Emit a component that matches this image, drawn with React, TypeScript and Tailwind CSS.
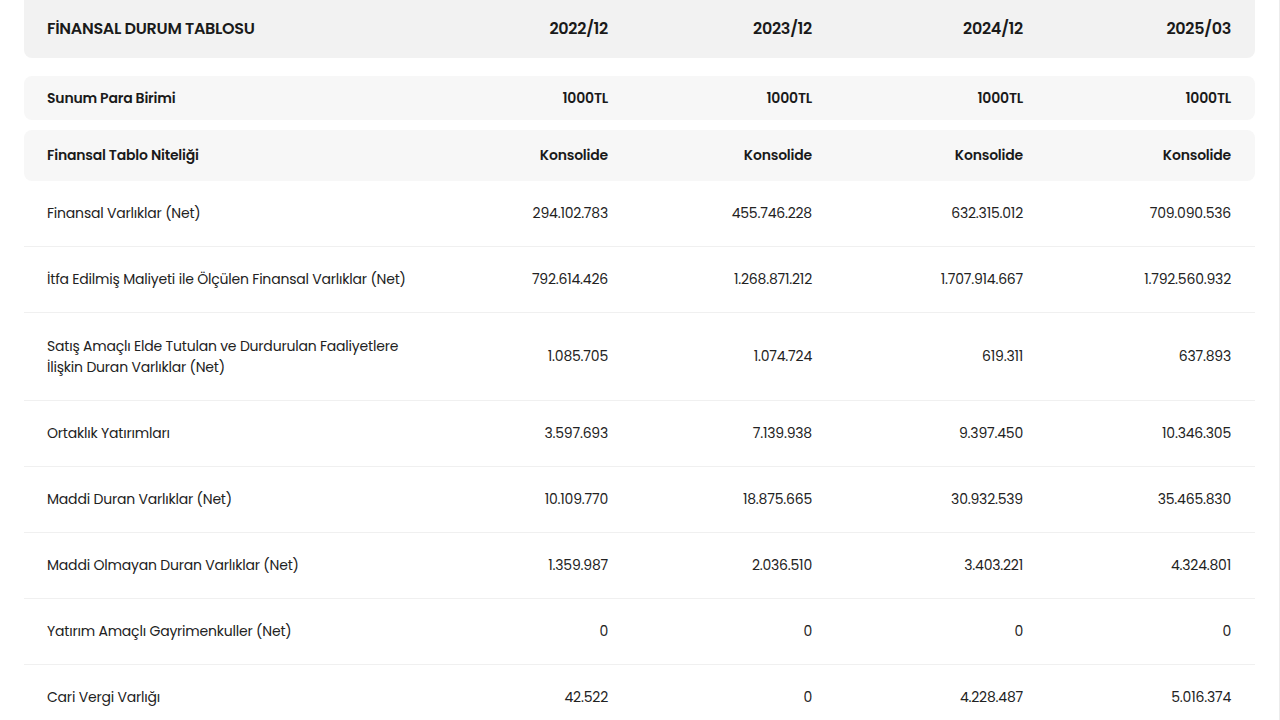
import React from "react";

const W = ["w-[380px]", "w-[181px]", "w-[204px]", "w-[211px]", "w-[208px]"];

const rows: [string, string[]][] = [
  ["Finansal Varlıklar (Net)", ["294.102.783", "455.746.228", "632.315.012", "709.090.536"]],
  ["İtfa Edilmiş Maliyeti ile Ölçülen Finansal Varlıklar (Net)", ["792.614.426", "1.268.871.212", "1.707.914.667", "1.792.560.932"]],
  ["Satış Amaçlı Elde Tutulan ve Durdurulan Faaliyetlere İlişkin Duran Varlıklar (Net)", ["1.085.705", "1.074.724", "619.311", "637.893"]],
  ["Ortaklık Yatırımları", ["3.597.693", "7.139.938", "9.397.450", "10.346.305"]],
  ["Maddi Duran Varlıklar (Net)", ["10.109.770", "18.875.665", "30.932.539", "35.465.830"]],
  ["Maddi Olmayan Duran Varlıklar (Net)", ["1.359.987", "2.036.510", "3.403.221", "4.324.801"]],
  ["Yatırım Amaçlı Gayrimenkuller (Net)", ["0", "0", "0", "0"]],
  ["Cari Vergi Varlığı", ["42.522", "0", "4.228.487", "5.016.374"]],
];

function Cells({ label, vals, cls }: { label: React.ReactNode; vals: string[]; cls: string }) {
  return (
    <>
      <div className={`${W[0]} shrink-0 ${cls}`}>{label}</div>
      {vals.map((v, i) => (
        <div key={i} className={`${W[i + 1]} shrink-0 text-right ${cls}`}>{v}</div>
      ))}
    </>
  );
}

export default function App() {
  return (
    <div className="w-[1280px] h-[720px] overflow-hidden bg-white border-r border-[#ececec]" style={{ fontFamily: "Poppins, Inter, 'Noto Sans', sans-serif" }}>
      <div className="ml-[24px] w-[1231px] text-[#1a1a1a]">
        <div className="h-[58px] bg-[#f2f2f2] rounded-b-lg flex items-center px-[23px]">
          <Cells label="FİNANSAL DURUM TABLOSU" vals={["2022/12", "2023/12", "2024/12", "2025/03"]} cls="text-[16px] font-semibold tracking-[-0.3px]" />
        </div>
        <div className="mt-[18px] h-[44px] bg-[#f7f7f7] rounded-lg flex items-center px-[23px]">
          <Cells label="Sunum Para Birimi" vals={["1000TL", "1000TL", "1000TL", "1000TL"]} cls="text-[14px] font-semibold tracking-[-0.2px]" />
        </div>
        <div className="mt-[10px] h-[51px] bg-[#f7f7f7] rounded-lg flex items-center px-[23px]">
          <Cells label="Finansal Tablo Niteliği" vals={["Konsolide", "Konsolide", "Konsolide", "Konsolide"]} cls="text-[14px] font-semibold tracking-[-0.2px]" />
        </div>
        {rows.map(([l, v], i) => (
          <div key={i} className={`flex items-center px-[23px] border-b border-[#f0f0f0] ${l.length > 60 ? "h-[88px]" : "h-[66px]"}`}>
            <Cells label={<span className="block w-[360px] leading-[21px]">{l}</span>} vals={v} cls="text-[14px] text-[#222] tracking-[-0.2px]" />
          </div>
        ))}
      </div>
    </div>
  );
}
